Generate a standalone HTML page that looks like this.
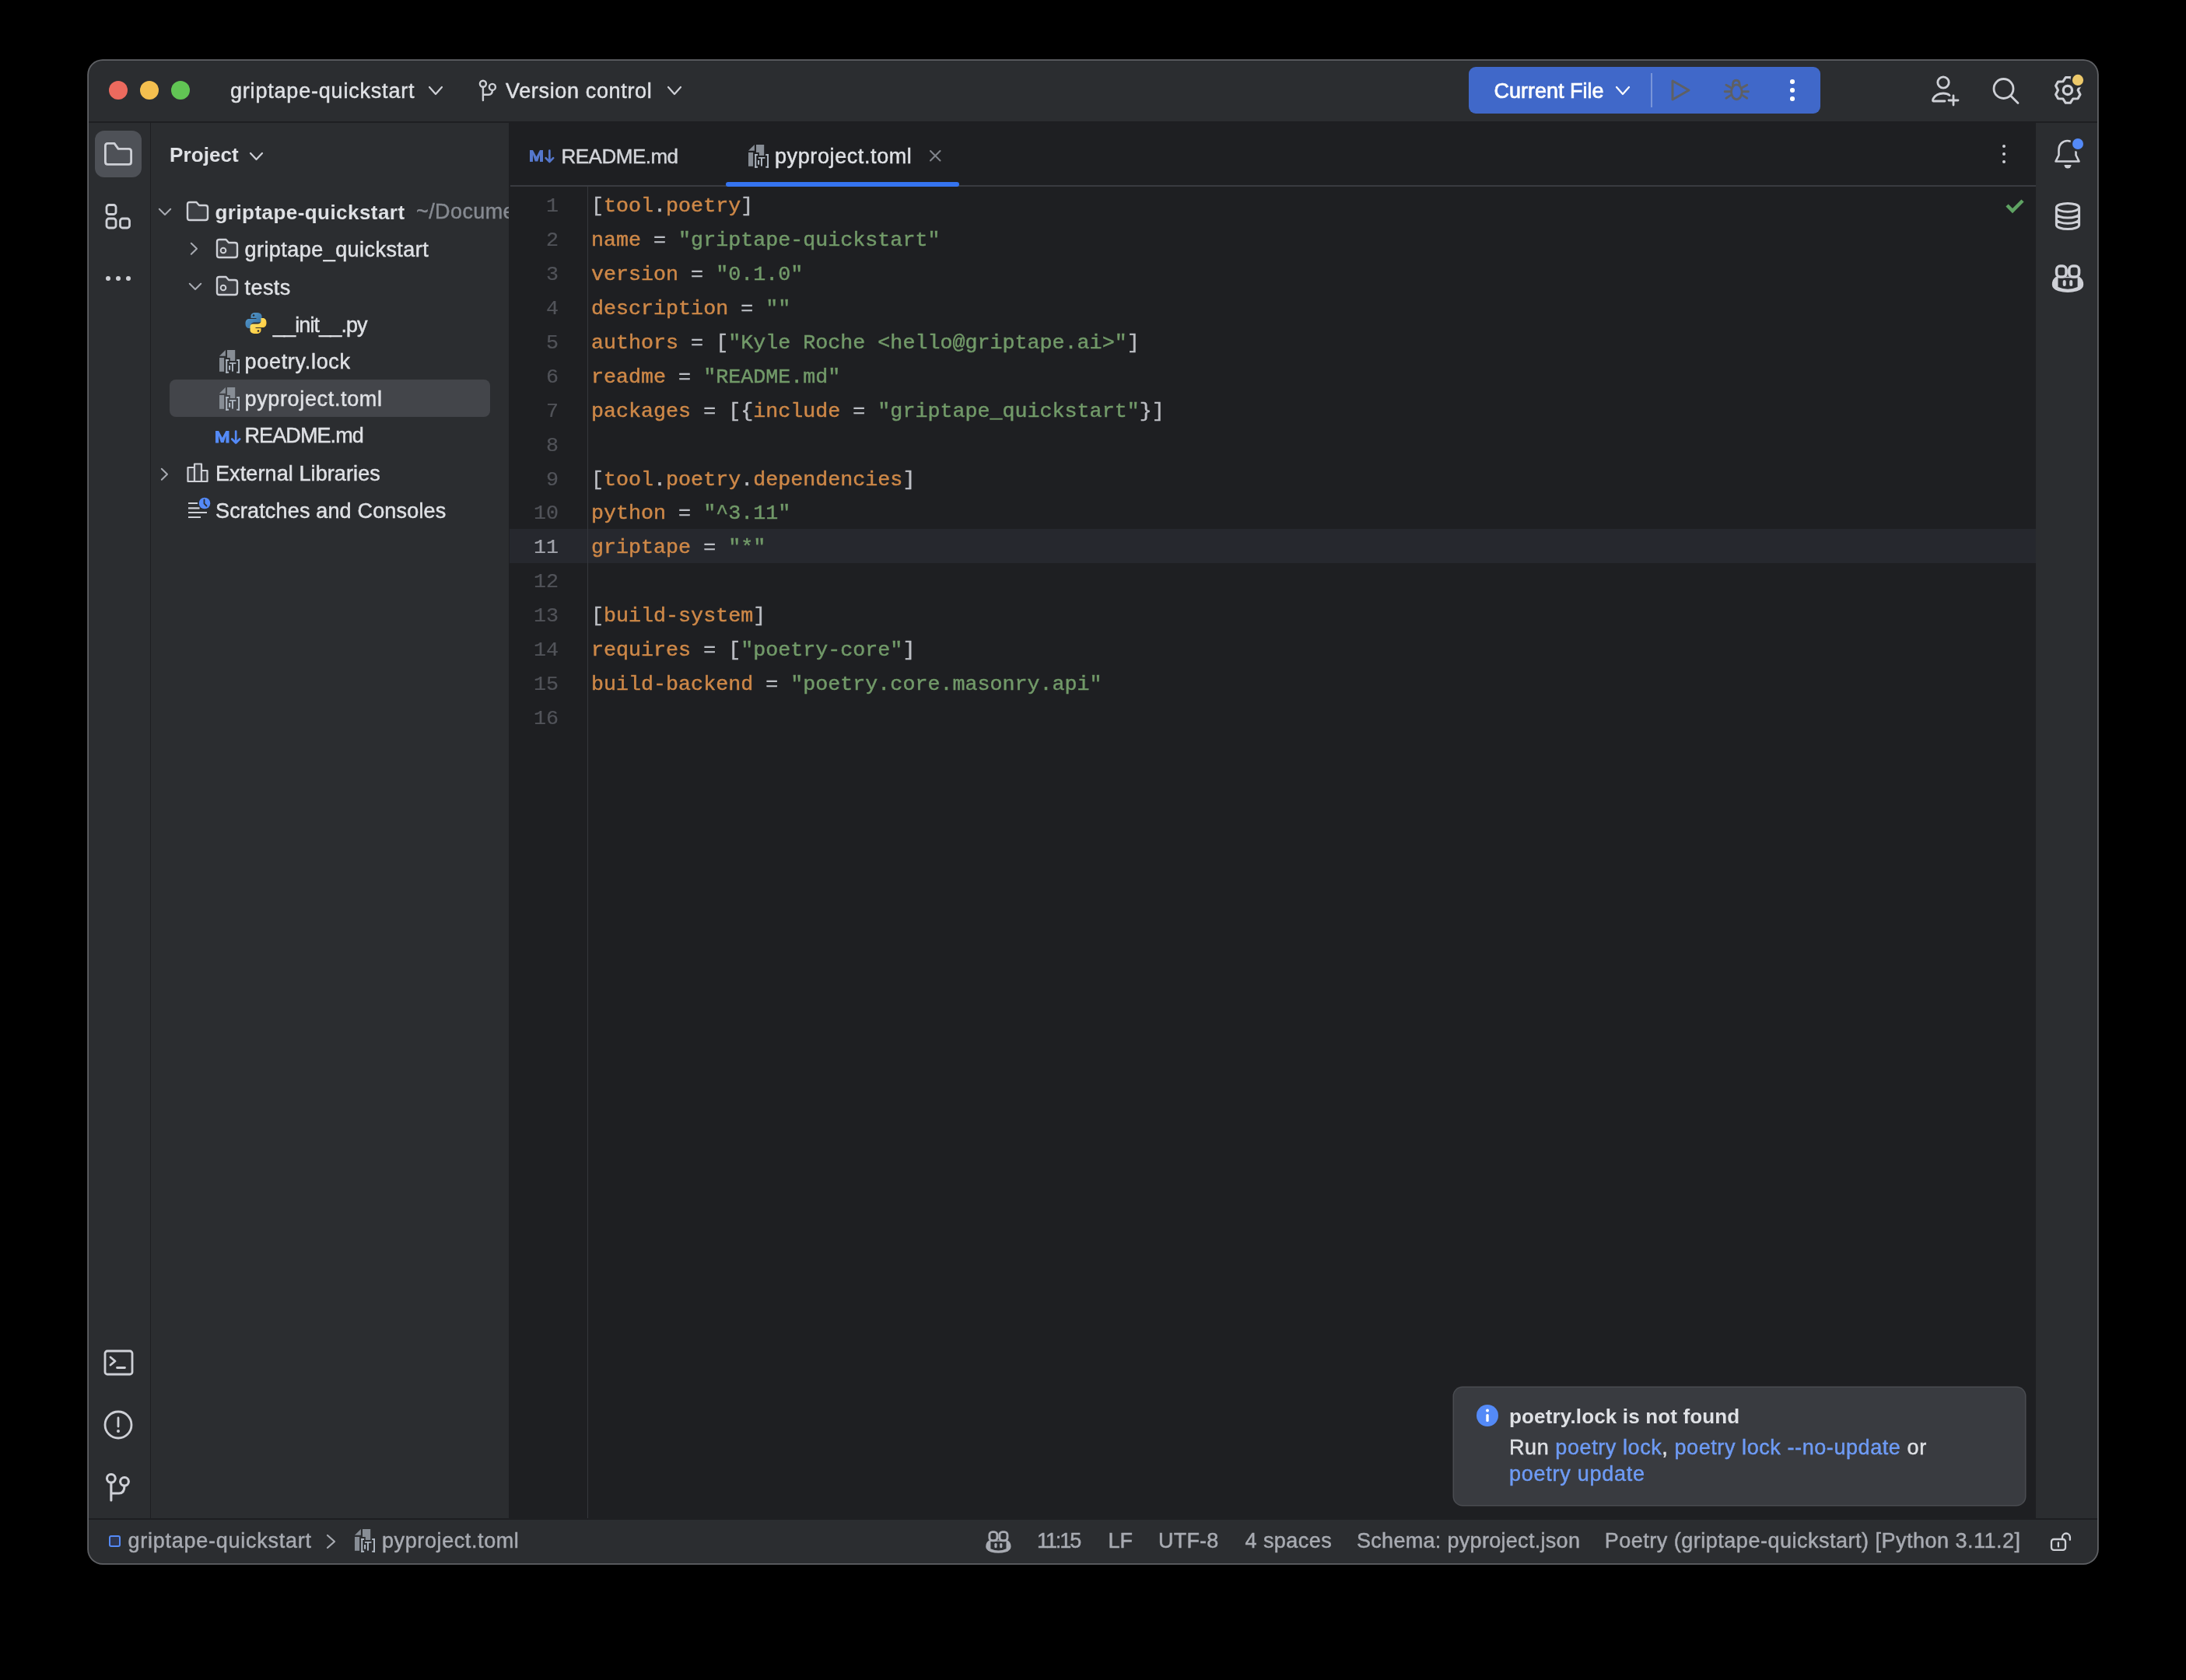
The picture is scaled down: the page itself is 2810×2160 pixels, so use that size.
<!DOCTYPE html>
<html><head><meta charset="utf-8"><title>pyproject.toml</title><style>
html,body{margin:0;padding:0;background:#000;width:2810px;height:2160px;overflow:hidden;}
.t{position:absolute;white-space:nowrap;font-family:'Liberation Sans', sans-serif;-webkit-text-stroke-width:0.45px;}
.r{position:absolute;}
.s{position:absolute;overflow:visible;}
</style></head>
<body><div id="root" style="position:absolute;left:0;top:0;width:2810px;height:2160px;will-change:transform">
<div class="r" style="left:114px;top:78px;width:2582px;height:1932px;background:#2B2D30;border-radius:18px;box-shadow:0 0 0 1.8px #606266;"></div><div class="r" style="left:114px;top:156px;width:2582px;height:2px;background:#1E1F22;"></div><div class="r" style="left:193px;top:158px;width:1px;height:1794px;background:#1E1F22;"></div><div class="r" style="left:654px;top:158px;width:1px;height:1794px;background:#1E1F22;"></div><div class="r" style="left:655px;top:158px;width:1962px;height:1794px;background:#1E1F22;"></div><div class="r" style="left:114px;top:1952px;width:2582px;height:2px;background:#1E1F22;"></div><div class="r" style="left:140px;top:104px;width:24px;height:24px;border-radius:50%;background:#EC6A5E"></div><div class="r" style="left:180px;top:104px;width:24px;height:24px;border-radius:50%;background:#F4BF4F"></div><div class="r" style="left:220px;top:104px;width:24px;height:24px;border-radius:50%;background:#61C554"></div><div class="t" style="left:296.00px;top:96.64px;font-size:27px;line-height:40px;color:#DFE1E5;font-weight:normal;letter-spacing:0.8px;font-family:'Liberation Sans', sans-serif;">griptape-quickstart</div><svg class="s" style="left:550px;top:110px;" width="20" height="13" viewBox="0 0 20 13"><polyline points="2,2 10.0,11 18,2" fill="none" stroke="#CED0D6" stroke-width="2.2" stroke-linecap="round" stroke-linejoin="round"/></svg><svg class="s" style="left:612px;top:100px;" width="34" height="36" viewBox="0 0 34 36"><g fill="none" stroke="#CED0D6" stroke-width="2.4" stroke-linecap="round"><circle cx="8.9" cy="7.8" r="4"/><circle cx="20.9" cy="11.9" r="4"/><path d="M8.9 11.8 V29 M8.9 21.8 H16 Q20.9 21.8 20.9 16"/></g></svg><div class="t" style="left:650.00px;top:96.64px;font-size:27px;line-height:40px;color:#DFE1E5;font-weight:normal;letter-spacing:0.65px;font-family:'Liberation Sans', sans-serif;">Version control</div><svg class="s" style="left:857px;top:110px;" width="20" height="13" viewBox="0 0 20 13"><polyline points="2,2 10.0,11 18,2" fill="none" stroke="#CED0D6" stroke-width="2.2" stroke-linecap="round" stroke-linejoin="round"/></svg><div class="r" style="left:1888px;top:86px;width:452px;height:60px;border-radius:9px;background:#4068C9"></div><div class="t" style="left:1920.50px;top:96.94px;font-size:27px;line-height:40px;color:#FFFFFF;font-weight:normal;letter-spacing:0px;font-family:'Liberation Sans', sans-serif;-webkit-text-stroke:0.7px #FFFFFF;">Current File</div><svg class="s" style="left:2076px;top:110px;" width="20" height="13" viewBox="0 0 20 13"><polyline points="2,2 10.0,11 18,2" fill="none" stroke="#FFFFFF" stroke-width="2.2" stroke-linecap="round" stroke-linejoin="round"/></svg><div class="r" style="left:2122px;top:94px;width:2px;height:44px;background:rgba(255,255,255,0.3);"></div><svg class="s" style="left:2144px;top:98px;" width="34" height="36" viewBox="0 0 34 36"><path d="M6 6 L27 18 L6 30 Z" fill="none" stroke="#5E6064" stroke-width="3" stroke-linejoin="round"/></svg><svg class="s" style="left:2214px;top:98px;" width="36" height="36" viewBox="0 0 36 36"><g fill="none" stroke="#5E6064" stroke-width="2.9" stroke-linecap="round"><ellipse cx="18.3" cy="20.3" rx="6.85" ry="9.4"/><path d="M13.3 12 Q13.3 5.2 17.8 5.2 Q22.3 5.2 22.3 12"/><path d="M4.9 11.2 L10.7 14.6 M3.2 19.7 H10.1 M4.9 28.3 L10.1 24.9 M31.7 11.2 L25.9 14.6 M33.4 19.7 H26.5 M31.7 28.3 L26.5 24.9"/></g></svg><div class="r" style="left:2301.2px;top:102.4px;width:5.6px;height:5.6px;border-radius:50%;background:#fff"></div><div class="r" style="left:2301.2px;top:113.2px;width:5.6px;height:5.6px;border-radius:50%;background:#fff"></div><div class="r" style="left:2301.2px;top:124.10000000000001px;width:5.6px;height:5.6px;border-radius:50%;background:#fff"></div><svg class="s" style="left:2478px;top:94px;" width="40" height="42" viewBox="0 0 40 42"><g fill="none" stroke="#CED0D6" stroke-width="2.8" stroke-linecap="round"><circle cx="20" cy="12" r="7.2"/><path d="M22 36 H7 Q6 36 7 33 Q11 26 20 26 Q25 26 28 28.5"/><path d="M33 29 V41 M27 35 H39"/></g></svg><svg class="s" style="left:2556px;top:94px;" width="44" height="44" viewBox="0 0 44 44"><g fill="none" stroke="#CED0D6" stroke-width="2.8" stroke-linecap="round"><circle cx="19.5" cy="20" r="12.5"/><path d="M29 29.5 L38 38.5"/></g></svg><svg class="s" style="left:2632px;top:88px;" width="56" height="52" viewBox="0 0 56 52"><path d="M23.30 11.50 L29.30 11.50 L32.70 16.81 L39.00 17.10 L42.00 22.30 L39.10 27.90 L42.00 33.50 L39.00 38.70 L32.70 38.99 L29.30 44.30 L23.30 44.30 L19.90 38.99 L13.60 38.70 L10.60 33.50 L13.50 27.90 L10.60 22.30 L13.60 17.10 L19.90 16.81 Z" fill="none" stroke="#CED0D6" stroke-width="3.1" stroke-linejoin="round"/><circle cx="25.9" cy="27.9" r="5.6" fill="none" stroke="#CED0D6" stroke-width="3.3"/><circle cx="39" cy="14.9" r="9.8" fill="#2B2D30"/><circle cx="39" cy="14.9" r="7.1" fill="#EDC96B"/></svg><div class="r" style="left:122px;top:168px;width:60px;height:60px;border-radius:12px;background:#4E5157"></div><svg class="s" style="left:130px;top:178px;" width="44" height="40" viewBox="0 0 44 40"><path d="M5.4 9.5 Q5.4 6.4 8.5 6.4 H17 L22 13.4 H35.5 Q38.6 13.4 38.6 16.5 V30.3 Q38.6 33.4 35.5 33.4 H8.5 Q5.4 33.4 5.4 30.3 Z" fill="none" stroke="#CED0D6" stroke-width="2.8" stroke-linejoin="round"/></svg><svg class="s" style="left:130px;top:258px;" width="44" height="40" viewBox="0 0 44 40"><g fill="none" stroke="#CED0D6" stroke-width="2.8"><rect x="7" y="5.5" width="12" height="12" rx="3"/><rect x="7" y="23" width="12" height="12" rx="3"/><rect x="24.5" y="23" width="12" height="12" rx="3"/></g></svg><div class="r" style="left:136px;top:355px;width:6px;height:6px;border-radius:50%;background:#CED0D6"></div><div class="r" style="left:149px;top:355px;width:6px;height:6px;border-radius:50%;background:#CED0D6"></div><div class="r" style="left:162px;top:355px;width:6px;height:6px;border-radius:50%;background:#CED0D6"></div><svg class="s" style="left:130px;top:1730px;" width="44" height="44" viewBox="0 0 44 44"><g fill="none" stroke="#CED0D6" stroke-width="2.8" stroke-linecap="round" stroke-linejoin="round"><rect x="5" y="7" width="35" height="30" rx="3"/><path d="M12 15 L18 20 L12 25 M20.5 28.5 H30.5"/></g></svg><svg class="s" style="left:130px;top:1810px;" width="44" height="44" viewBox="0 0 44 44"><g fill="none" stroke="#CED0D6" stroke-width="2.8" stroke-linecap="round"><circle cx="22" cy="22" r="17"/><path d="M22 13 V24"/></g><circle cx="22" cy="30" r="2" fill="#CED0D6"/></svg><svg class="s" style="left:128px;top:1886px;" width="48" height="48" viewBox="0 0 48 48"><g fill="none" stroke="#CED0D6" stroke-width="3.1" stroke-linecap="round"><circle cx="14.86" cy="14.86" r="5.4"/><circle cx="32" cy="18.86" r="5.4"/><path d="M14.86 20.3 V42.9 M14.86 34 H25 Q32 34 32 24.3"/></g></svg><div class="t" style="left:218.00px;top:179.39px;font-size:26px;line-height:40px;color:#DFE1E5;font-weight:bold;letter-spacing:0.1px;font-family:'Liberation Sans', sans-serif;-webkit-text-stroke-width:0;">Project</div><svg class="s" style="left:320px;top:195px;" width="19" height="12" viewBox="0 0 19 12"><polyline points="2,2 9.5,10 17,2" fill="none" stroke="#CED0D6" stroke-width="2.2" stroke-linecap="round" stroke-linejoin="round"/></svg><div class="r" style="left:218px;top:488px;width:412px;height:48px;border-radius:8px;background:#43454A"></div><svg class="s" style="left:202px;top:266px;" width="20" height="14" viewBox="0 0 20 14"><polyline points="2.8,2.8 10,10 17.2,2.8" fill="none" stroke="#A8ABB2" stroke-width="2" stroke-linecap="round" stroke-linejoin="round"/></svg><svg class="s" style="left:239px;top:258px;" width="31" height="28" viewBox="0 0 31 28"><path d="M2 5 Q2 2 5 2 H13.5 L17 6 H25 Q28 6 28 9 V22 Q28 25 25 25 H5 Q2 25 2 22 Z" fill="#3C3E43" stroke="#CED0D6" stroke-width="2.4" stroke-linejoin="round"/></svg><div class="t" style="left:276.50px;top:253.19px;font-size:26px;line-height:40px;color:#DFE1E5;font-weight:bold;letter-spacing:0.45px;font-family:'Liberation Sans', sans-serif;-webkit-text-stroke-width:0;">griptape-quickstart</div><div class="t" style="left:535px;top:252px;width:119px;overflow:hidden;white-space:nowrap;font-size:27px;line-height:40px;color:#868A91;font-family:'Liberation Sans', sans-serif;letter-spacing:0.4px">~/Documents/griptape</div><svg class="s" style="left:243px;top:310px;" width="14" height="20" viewBox="0 0 14 20"><polyline points="2.8,2.8 10,9.8 2.8,16.8" fill="none" stroke="#A8ABB2" stroke-width="2" stroke-linecap="round" stroke-linejoin="round"/></svg><svg class="s" style="left:277px;top:306px;" width="31" height="28" viewBox="0 0 31 28"><path d="M2 5 Q2 2 5 2 H13.5 L17 6 H25 Q28 6 28 9 V22 Q28 25 25 25 H5 Q2 25 2 22 Z" fill="#3C3E43" stroke="#CED0D6" stroke-width="2.4" stroke-linejoin="round"/><circle cx="10" cy="16" r="3.3" fill="none" stroke="#CED0D6" stroke-width="2"/></svg><div class="t" style="left:314.50px;top:301.44px;font-size:27px;line-height:40px;color:#DFE1E5;font-weight:normal;letter-spacing:0.45px;font-family:'Liberation Sans', sans-serif;">griptape_quickstart</div><svg class="s" style="left:241px;top:362px;" width="20" height="14" viewBox="0 0 20 14"><polyline points="2.8,2.8 10,10 17.2,2.8" fill="none" stroke="#A8ABB2" stroke-width="2" stroke-linecap="round" stroke-linejoin="round"/></svg><svg class="s" style="left:277px;top:354px;" width="31" height="28" viewBox="0 0 31 28"><path d="M2 5 Q2 2 5 2 H13.5 L17 6 H25 Q28 6 28 9 V22 Q28 25 25 25 H5 Q2 25 2 22 Z" fill="#3C3E43" stroke="#CED0D6" stroke-width="2.4" stroke-linejoin="round"/><circle cx="10" cy="16" r="3.3" fill="none" stroke="#CED0D6" stroke-width="2"/></svg><div class="t" style="left:314.50px;top:349.64px;font-size:27px;line-height:40px;color:#DFE1E5;font-weight:normal;letter-spacing:0.45px;font-family:'Liberation Sans', sans-serif;">tests</div><svg class="s" style="left:315px;top:401px;" width="29" height="30" viewBox="0 0 29 30"><defs><linearGradient id="pb" x1="0" y1="0" x2="1" y2="1"><stop offset="0" stop-color="#5A9FD4"/><stop offset="1" stop-color="#306998"/></linearGradient><linearGradient id="py" x1="0" y1="0" x2="1" y2="1"><stop offset="0" stop-color="#FFE873"/><stop offset="1" stop-color="#FFC331"/></linearGradient></defs><path d="M14 1 C9 1 7.5 3 7.5 5.5 V8 H14.5 V9 H5 C2 9 0.5 11.5 0.5 15 C0.5 18.5 2 21 5 21 H7.5 V17.5 C7.5 15 9.5 13.5 12 13.5 H18 C20 13.5 21.5 12 21.5 10 V5.5 C21.5 3 19.5 1 14 1 Z" fill="url(#pb)"/><circle cx="11" cy="4.5" r="1.3" fill="#2B2D30"/><path d="M14 28 C19 28 20.5 26 20.5 23.5 V21 H13.5 V20 H23 C26 20 27.5 17.5 27.5 14 C27.5 10.5 26 8 23 8 H20.5 V11.5 C20.5 14 18.5 15.5 16 15.5 H10 C8 15.5 6.5 17 6.5 19 V23.5 C6.5 26 8.5 28 14 28 Z" fill="url(#py)"/><circle cx="17" cy="24.5" r="1.3" fill="#2B2D30"/></svg><div class="t" style="left:351.00px;top:398.04px;font-size:27px;line-height:40px;color:#DFE1E5;font-weight:normal;letter-spacing:-0.9px;font-family:'Liberation Sans', sans-serif;">__init__.py</div><svg class="s" style="left:282px;top:449.9px;" width="28" height="32" viewBox="0 0 28 32"><g fill="#878D95"><path d="M0 7.8 L7.9 0 V7.8 Z"/><rect x="0" y="10" width="6.1" height="17.8"/><path d="M10 0 H20.2 V14 H13.8 V10 H10 Z"/></g><g fill="#B2BBC5"><rect x="8.3" y="12.1" width="1.9" height="17.6"/><rect x="8.3" y="12.1" width="3.8" height="1.9"/><rect x="8.3" y="27.8" width="3.8" height="1.9"/><rect x="24.1" y="12.1" width="1.9" height="17.6"/><rect x="22.2" y="12.1" width="3.8" height="1.9"/><rect x="22.2" y="27.8" width="3.8" height="1.9"/><rect x="12.1" y="20" width="2" height="5.7"/><rect x="12.9" y="16.1" width="8.5" height="1.7"/><rect x="16" y="17" width="1.9" height="10.6"/></g></svg><div class="t" style="left:314.50px;top:444.84px;font-size:27px;line-height:40px;color:#DFE1E5;font-weight:normal;letter-spacing:0.7px;font-family:'Liberation Sans', sans-serif;">poetry.lock</div><svg class="s" style="left:282px;top:498px;" width="28" height="32" viewBox="0 0 28 32"><g fill="#878D95"><path d="M0 7.8 L7.9 0 V7.8 Z"/><rect x="0" y="10" width="6.1" height="17.8"/><path d="M10 0 H20.2 V14 H13.8 V10 H10 Z"/></g><g fill="#B2BBC5"><rect x="8.3" y="12.1" width="1.9" height="17.6"/><rect x="8.3" y="12.1" width="3.8" height="1.9"/><rect x="8.3" y="27.8" width="3.8" height="1.9"/><rect x="24.1" y="12.1" width="1.9" height="17.6"/><rect x="22.2" y="12.1" width="3.8" height="1.9"/><rect x="22.2" y="27.8" width="3.8" height="1.9"/><rect x="12.1" y="20" width="2" height="5.7"/><rect x="12.9" y="16.1" width="8.5" height="1.7"/><rect x="16" y="17" width="1.9" height="10.6"/></g></svg><div class="t" style="left:314.50px;top:492.94px;font-size:27px;line-height:40px;color:#DFE1E5;font-weight:normal;letter-spacing:0.65px;font-family:'Liberation Sans', sans-serif;">pyproject.toml</div><svg class="s" style="left:276.6px;top:554px;" width="33" height="18" viewBox="0 0 33 18"><g transform="scale(1.03)"><path d="M0 15 V0 H4 L8.5 8.5 L13 0 H17 V15 H13 V6 L10.3 14.6 H6.7 L4 6 V15 Z" fill="#548AF7"/><path d="M25.4 0.5 V13.5 M20.6 10.2 L25.4 15 L30.2 10.2" fill="none" stroke="#548AF7" stroke-width="2.6" stroke-linecap="round" stroke-linejoin="round"/></g></svg><div class="t" style="left:314.50px;top:540.44px;font-size:27px;line-height:40px;color:#DFE1E5;font-weight:normal;letter-spacing:-0.9px;font-family:'Liberation Sans', sans-serif;">README.md</div><svg class="s" style="left:205px;top:600px;" width="14" height="20" viewBox="0 0 14 20"><polyline points="2.8,2.8 10,9.8 2.8,16.8" fill="none" stroke="#A8ABB2" stroke-width="2" stroke-linecap="round" stroke-linejoin="round"/></svg><svg class="s" style="left:239px;top:594px;" width="30" height="28" viewBox="0 0 30 28"><g fill="#3C3E43" stroke="#CED0D6" stroke-width="2.2" stroke-linejoin="round"><rect x="2.5" y="7" width="8.5" height="18"/><rect x="11" y="2.5" width="9" height="22.5"/><rect x="20" y="11" width="7.5" height="14"/></g></svg><div class="t" style="left:277.00px;top:588.84px;font-size:27px;line-height:40px;color:#DFE1E5;font-weight:normal;letter-spacing:0.1px;font-family:'Liberation Sans', sans-serif;">External Libraries</div><svg class="s" style="left:239px;top:637px;" width="34" height="32" viewBox="0 0 34 32"><g stroke="#CED0D6" stroke-width="2.2"><path d="M3 10 H15 M3 16.3 H17.5 M3 22 H27 M3 28 H19"/></g><circle cx="24" cy="10" r="7.3" fill="#548AF7"/><path d="M23.5 5.5 V10.5 L26.5 13.5" fill="none" stroke="#2B2D30" stroke-width="1.8" stroke-linecap="round"/></svg><div class="t" style="left:277.00px;top:637.24px;font-size:27px;line-height:40px;color:#DFE1E5;font-weight:normal;letter-spacing:0.17px;font-family:'Liberation Sans', sans-serif;">Scratches and Consoles</div><div class="r" style="left:656px;top:238px;width:1961px;height:2px;background:#393B40;"></div><svg class="s" style="left:681px;top:193.2px;" width="33" height="18" viewBox="0 0 33 18"><g transform="scale(1.0)"><path d="M0 15 V0 H4 L8.5 8.5 L13 0 H17 V15 H13 V6 L10.3 14.6 H6.7 L4 6 V15 Z" fill="#5577CC"/><path d="M25.4 0.5 V13.5 M20.6 10.2 L25.4 15 L30.2 10.2" fill="none" stroke="#5577CC" stroke-width="2.6" stroke-linecap="round" stroke-linejoin="round"/></g></svg><div class="t" style="left:721.50px;top:181.09px;font-size:26px;line-height:40px;color:#D2D4D9;font-weight:normal;letter-spacing:-0.5px;font-family:'Liberation Sans', sans-serif;">README.md</div><svg class="s" style="left:961.9px;top:186px;" width="28" height="32" viewBox="0 0 28 32"><g fill="#878D95"><path d="M0 7.8 L7.9 0 V7.8 Z"/><rect x="0" y="10" width="6.1" height="17.8"/><path d="M10 0 H20.2 V14 H13.8 V10 H10 Z"/></g><g fill="#B2BBC5"><rect x="8.3" y="12.1" width="1.9" height="17.6"/><rect x="8.3" y="12.1" width="3.8" height="1.9"/><rect x="8.3" y="27.8" width="3.8" height="1.9"/><rect x="24.1" y="12.1" width="1.9" height="17.6"/><rect x="22.2" y="12.1" width="3.8" height="1.9"/><rect x="22.2" y="27.8" width="3.8" height="1.9"/><rect x="12.1" y="20" width="2" height="5.7"/><rect x="12.9" y="16.1" width="8.5" height="1.7"/><rect x="16" y="17" width="1.9" height="10.6"/></g></svg><div class="t" style="left:996.00px;top:180.74px;font-size:27px;line-height:40px;color:#DFE1E5;font-weight:normal;letter-spacing:0.6px;font-family:'Liberation Sans', sans-serif;">pyproject.toml</div><svg class="s" style="left:1190.8px;top:188.8px;" width="22" height="22" viewBox="0 0 22 22"><path d="M5 5 L17.5 17.5 M17.5 5 L5 17.5" stroke="#80848B" stroke-width="2.1" stroke-linecap="round"/></svg><div class="r" style="left:933px;top:234px;width:300px;height:6px;border-radius:3px;background:#3574F0"></div><div class="r" style="left:2573.5px;top:185.8px;width:4.4px;height:4.4px;border-radius:50%;background:#CED0D6"></div><div class="r" style="left:2573.5px;top:195.8px;width:4.4px;height:4.4px;border-radius:50%;background:#CED0D6"></div><div class="r" style="left:2573.5px;top:205.8px;width:4.4px;height:4.4px;border-radius:50%;background:#CED0D6"></div><div class="r" style="left:655px;top:680px;width:1962px;height:44px;background:#26282E;"></div><div class="r" style="left:754.5px;top:240px;width:1.5px;height:1712px;background:#35373C;"></div><div class="t" style="left:600px;width:118px;text-align:right;top:245.10px;font-size:26.7px;line-height:40px;color:#515359;font-family:'Liberation Mono', monospace;-webkit-text-stroke:0.2px #515359">1</div><div class="t" style="left:760px;top:245.10px;font-size:26.7px;line-height:40px;font-family:'Liberation Mono', monospace;white-space:pre;-webkit-text-stroke-width:0.45px"><span style="color:#BCBEC4">[</span><span style="color:#CE8848">tool</span><span style="color:#BCBEC4">.</span><span style="color:#CE8848">poetry</span><span style="color:#BCBEC4">]</span></div><div class="t" style="left:600px;width:118px;text-align:right;top:289.03px;font-size:26.7px;line-height:40px;color:#515359;font-family:'Liberation Mono', monospace;-webkit-text-stroke:0.2px #515359">2</div><div class="t" style="left:760px;top:289.03px;font-size:26.7px;line-height:40px;font-family:'Liberation Mono', monospace;white-space:pre;-webkit-text-stroke-width:0.45px"><span style="color:#CE8848">name</span><span style="color:#BCBEC4"> = </span><span style="color:#729A69">&quot;griptape-quickstart&quot;</span></div><div class="t" style="left:600px;width:118px;text-align:right;top:332.96px;font-size:26.7px;line-height:40px;color:#515359;font-family:'Liberation Mono', monospace;-webkit-text-stroke:0.2px #515359">3</div><div class="t" style="left:760px;top:332.96px;font-size:26.7px;line-height:40px;font-family:'Liberation Mono', monospace;white-space:pre;-webkit-text-stroke-width:0.45px"><span style="color:#CE8848">version</span><span style="color:#BCBEC4"> = </span><span style="color:#729A69">&quot;0.1.0&quot;</span></div><div class="t" style="left:600px;width:118px;text-align:right;top:376.89px;font-size:26.7px;line-height:40px;color:#515359;font-family:'Liberation Mono', monospace;-webkit-text-stroke:0.2px #515359">4</div><div class="t" style="left:760px;top:376.89px;font-size:26.7px;line-height:40px;font-family:'Liberation Mono', monospace;white-space:pre;-webkit-text-stroke-width:0.45px"><span style="color:#CE8848">description</span><span style="color:#BCBEC4"> = </span><span style="color:#729A69">&quot;&quot;</span></div><div class="t" style="left:600px;width:118px;text-align:right;top:420.82px;font-size:26.7px;line-height:40px;color:#515359;font-family:'Liberation Mono', monospace;-webkit-text-stroke:0.2px #515359">5</div><div class="t" style="left:760px;top:420.82px;font-size:26.7px;line-height:40px;font-family:'Liberation Mono', monospace;white-space:pre;-webkit-text-stroke-width:0.45px"><span style="color:#CE8848">authors</span><span style="color:#BCBEC4"> = [</span><span style="color:#729A69">&quot;Kyle Roche &lt;hello@griptape.ai&gt;&quot;</span><span style="color:#BCBEC4">]</span></div><div class="t" style="left:600px;width:118px;text-align:right;top:464.75px;font-size:26.7px;line-height:40px;color:#515359;font-family:'Liberation Mono', monospace;-webkit-text-stroke:0.2px #515359">6</div><div class="t" style="left:760px;top:464.75px;font-size:26.7px;line-height:40px;font-family:'Liberation Mono', monospace;white-space:pre;-webkit-text-stroke-width:0.45px"><span style="color:#CE8848">readme</span><span style="color:#BCBEC4"> = </span><span style="color:#729A69">&quot;README.md&quot;</span></div><div class="t" style="left:600px;width:118px;text-align:right;top:508.68px;font-size:26.7px;line-height:40px;color:#515359;font-family:'Liberation Mono', monospace;-webkit-text-stroke:0.2px #515359">7</div><div class="t" style="left:760px;top:508.68px;font-size:26.7px;line-height:40px;font-family:'Liberation Mono', monospace;white-space:pre;-webkit-text-stroke-width:0.45px"><span style="color:#CE8848">packages</span><span style="color:#BCBEC4"> = [{</span><span style="color:#CE8848">include</span><span style="color:#BCBEC4"> = </span><span style="color:#729A69">&quot;griptape_quickstart&quot;</span><span style="color:#BCBEC4">}]</span></div><div class="t" style="left:600px;width:118px;text-align:right;top:552.61px;font-size:26.7px;line-height:40px;color:#515359;font-family:'Liberation Mono', monospace;-webkit-text-stroke:0.2px #515359">8</div><div class="t" style="left:600px;width:118px;text-align:right;top:596.54px;font-size:26.7px;line-height:40px;color:#515359;font-family:'Liberation Mono', monospace;-webkit-text-stroke:0.2px #515359">9</div><div class="t" style="left:760px;top:596.54px;font-size:26.7px;line-height:40px;font-family:'Liberation Mono', monospace;white-space:pre;-webkit-text-stroke-width:0.45px"><span style="color:#BCBEC4">[</span><span style="color:#CE8848">tool</span><span style="color:#BCBEC4">.</span><span style="color:#CE8848">poetry</span><span style="color:#BCBEC4">.</span><span style="color:#CE8848">dependencies</span><span style="color:#BCBEC4">]</span></div><div class="t" style="left:600px;width:118px;text-align:right;top:640.47px;font-size:26.7px;line-height:40px;color:#515359;font-family:'Liberation Mono', monospace;-webkit-text-stroke:0.2px #515359">10</div><div class="t" style="left:760px;top:640.47px;font-size:26.7px;line-height:40px;font-family:'Liberation Mono', monospace;white-space:pre;-webkit-text-stroke-width:0.45px"><span style="color:#CE8848">python</span><span style="color:#BCBEC4"> = </span><span style="color:#729A69">&quot;^3.11&quot;</span></div><div class="t" style="left:600px;width:118px;text-align:right;top:684.40px;font-size:26.7px;line-height:40px;color:#A1A3AB;font-family:'Liberation Mono', monospace;-webkit-text-stroke:0.2px #A1A3AB">11</div><div class="t" style="left:760px;top:684.40px;font-size:26.7px;line-height:40px;font-family:'Liberation Mono', monospace;white-space:pre;-webkit-text-stroke-width:0.45px"><span style="color:#CE8848">griptape</span><span style="color:#BCBEC4"> = </span><span style="color:#729A69">&quot;*&quot;</span></div><div class="t" style="left:600px;width:118px;text-align:right;top:728.33px;font-size:26.7px;line-height:40px;color:#515359;font-family:'Liberation Mono', monospace;-webkit-text-stroke:0.2px #515359">12</div><div class="t" style="left:600px;width:118px;text-align:right;top:772.26px;font-size:26.7px;line-height:40px;color:#515359;font-family:'Liberation Mono', monospace;-webkit-text-stroke:0.2px #515359">13</div><div class="t" style="left:760px;top:772.26px;font-size:26.7px;line-height:40px;font-family:'Liberation Mono', monospace;white-space:pre;-webkit-text-stroke-width:0.45px"><span style="color:#BCBEC4">[</span><span style="color:#CE8848">build-system</span><span style="color:#BCBEC4">]</span></div><div class="t" style="left:600px;width:118px;text-align:right;top:816.19px;font-size:26.7px;line-height:40px;color:#515359;font-family:'Liberation Mono', monospace;-webkit-text-stroke:0.2px #515359">14</div><div class="t" style="left:760px;top:816.19px;font-size:26.7px;line-height:40px;font-family:'Liberation Mono', monospace;white-space:pre;-webkit-text-stroke-width:0.45px"><span style="color:#CE8848">requires</span><span style="color:#BCBEC4"> = [</span><span style="color:#729A69">&quot;poetry-core&quot;</span><span style="color:#BCBEC4">]</span></div><div class="t" style="left:600px;width:118px;text-align:right;top:860.12px;font-size:26.7px;line-height:40px;color:#515359;font-family:'Liberation Mono', monospace;-webkit-text-stroke:0.2px #515359">15</div><div class="t" style="left:760px;top:860.12px;font-size:26.7px;line-height:40px;font-family:'Liberation Mono', monospace;white-space:pre;-webkit-text-stroke-width:0.45px"><span style="color:#CE8848">build-backend</span><span style="color:#BCBEC4"> = </span><span style="color:#729A69">&quot;poetry.core.masonry.api&quot;</span></div><div class="t" style="left:600px;width:118px;text-align:right;top:904.05px;font-size:26.7px;line-height:40px;color:#515359;font-family:'Liberation Mono', monospace;-webkit-text-stroke:0.2px #515359">16</div><svg class="s" style="left:2576px;top:253px;" width="28" height="24" viewBox="0 0 28 24"><path d="M4 11 L11 18 L24 5" fill="none" stroke="#5FA363" stroke-width="4.5"/></svg><div class="r" style="left:2618px;top:158px;width:78px;height:1794px;background:#2B2D30;"></div><svg class="s" style="left:2636px;top:176px;" width="46" height="46" viewBox="0 0 46 46"><path d="M6.5 31.5 L10.5 23.5 V16 A11 11 0 0 1 32.5 16 V23.5 L36.5 31.5 Z" fill="none" stroke="#CED0D6" stroke-width="2.6" stroke-linejoin="round"/><path d="M17.5 36 H26.5 A4.5 4.5 0 0 1 17.5 36 Z" fill="#CED0D6"/><circle cx="35" cy="9" r="10" fill="#2B2D30"/><circle cx="35" cy="9" r="7" fill="#548AF7"/></svg><svg class="s" style="left:2636px;top:256px;" width="44" height="44" viewBox="0 0 44 44"><g fill="none" stroke="#CED0D6" stroke-width="3"><ellipse cx="22" cy="10.85" rx="14.6" ry="5.45"/><path d="M7.4 10.85 V33.15 M36.6 10.85 V33.15 M7.4 18.65 A14.6 5.45 0 0 0 36.6 18.65 M7.4 25.75 A14.6 5.45 0 0 0 36.6 25.75 M7.4 33.15 A14.6 5.45 0 0 0 36.6 33.15"/></g></svg><svg class="s" style="left:2630px;top:330px;" width="58" height="54" viewBox="0 0 58 54"><g transform="scale(1.0)"><path d="M13 25.7 L43 25.7 Q48.3 29 48.2 36 Q48 41.5 40 44.3 Q34 46 28 46 Q22 46 16 44.3 Q8 41.5 7.8 36 Q7.7 29 13 25.7 Z" fill="#CED0D6"/><path d="M15.5 27.2 H40.6 V39 Q34 41.8 28 41.8 Q22 41.8 15.5 39 Z" fill="#2B2D30"/><g fill="none" stroke="#CED0D6" stroke-width="3.6"><rect x="13.6" y="12" width="12.5" height="14" rx="4.8"/><rect x="29.8" y="12" width="12.7" height="14" rx="4.8"/></g><rect x="21.7" y="30" width="4" height="7.9" rx="2" fill="#CED0D6"/><rect x="30.2" y="30" width="4" height="7.9" rx="2" fill="#CED0D6"/></g></svg><div class="r" style="left:1869px;top:1783.5px;width:734px;height:151px;border-radius:11px;background:#393B40;box-shadow:0 0 0 1.5px #4A4C51"></div><svg class="s" style="left:1897px;top:1806px;" width="30" height="30" viewBox="0 0 30 30"><circle cx="15" cy="14" r="14" fill="#548AF7"/><rect x="13.3" y="12" width="3.4" height="10" rx="1.5" fill="#fff"/><circle cx="15" cy="7.5" r="2" fill="#fff"/></svg><div class="t" style="left:1940.00px;top:1800.59px;font-size:26px;line-height:40px;color:#DFE1E5;font-weight:bold;letter-spacing:0.15px;font-family:'Liberation Sans', sans-serif;-webkit-text-stroke-width:0;">poetry.lock is not found</div><div class="t" style="left:1940.00px;top:1840.84px;font-size:27px;line-height:40px;color:#DFE1E5;font-weight:normal;letter-spacing:0.58px;font-family:'Liberation Sans', sans-serif;">Run <span style="color:#6E9BF5">poetry lock</span>, <span style="color:#6E9BF5">poetry lock --no-update</span> or</div><div class="t" style="left:1940.00px;top:1874.64px;font-size:27px;line-height:40px;color:#DFE1E5;font-weight:normal;letter-spacing:0.75px;font-family:'Liberation Sans', sans-serif;"><span style="color:#6E9BF5">poetry update</span></div><div class="r" style="left:140px;top:1974px;width:15px;height:15px;border-radius:3px;box-sizing:border-box;border:2px solid #548AF7;background:#2E3650"></div><div class="t" style="left:164.40px;top:1961.14px;font-size:27px;line-height:40px;color:#A8ABB2;font-weight:normal;letter-spacing:0.75px;font-family:'Liberation Sans', sans-serif;">griptape-quickstart</div><svg class="s" style="left:418px;top:1970px;" width="16" height="24" viewBox="0 0 16 24"><polyline points="3,4 12,12 3,20" fill="none" stroke="#A8ABB2" stroke-width="2.2" stroke-linecap="round" stroke-linejoin="round"/></svg><svg class="s" style="left:455.7px;top:1966px;" width="28" height="32" viewBox="0 0 28 32"><g fill="#878D95"><path d="M0 7.8 L7.9 0 V7.8 Z"/><rect x="0" y="10" width="6.1" height="17.8"/><path d="M10 0 H20.2 V14 H13.8 V10 H10 Z"/></g><g fill="#B2BBC5"><rect x="8.3" y="12.1" width="1.9" height="17.6"/><rect x="8.3" y="12.1" width="3.8" height="1.9"/><rect x="8.3" y="27.8" width="3.8" height="1.9"/><rect x="24.1" y="12.1" width="1.9" height="17.6"/><rect x="22.2" y="12.1" width="3.8" height="1.9"/><rect x="22.2" y="27.8" width="3.8" height="1.9"/><rect x="12.1" y="20" width="2" height="5.7"/><rect x="12.9" y="16.1" width="8.5" height="1.7"/><rect x="16" y="17" width="1.9" height="10.6"/></g></svg><div class="t" style="left:491.00px;top:1961.14px;font-size:27px;line-height:40px;color:#A8ABB2;font-weight:normal;letter-spacing:0.6px;font-family:'Liberation Sans', sans-serif;">pyproject.toml</div><svg class="s" style="left:1261.4px;top:1959.8px;" width="46" height="43" viewBox="0 0 46 43"><g transform="scale(0.8)"><path d="M13 25.7 L43 25.7 Q48.3 29 48.2 36 Q48 41.5 40 44.3 Q34 46 28 46 Q22 46 16 44.3 Q8 41.5 7.8 36 Q7.7 29 13 25.7 Z" fill="#A8ABB2"/><path d="M15.5 27.2 H40.6 V39 Q34 41.8 28 41.8 Q22 41.8 15.5 39 Z" fill="#2B2D30"/><g fill="none" stroke="#A8ABB2" stroke-width="3.6"><rect x="13.6" y="12" width="12.5" height="14" rx="4.8"/><rect x="29.8" y="12" width="12.7" height="14" rx="4.8"/></g><rect x="21.7" y="30" width="4" height="7.9" rx="2" fill="#A8ABB2"/><rect x="30.2" y="30" width="4" height="7.9" rx="2" fill="#A8ABB2"/></g></svg><div class="t" style="left:1333.00px;top:1960.94px;font-size:27px;line-height:40px;color:#A8ABB2;font-weight:normal;letter-spacing:-2.1px;font-family:'Liberation Sans', sans-serif;">11:15</div><div class="t" style="left:1424.50px;top:1960.94px;font-size:27px;line-height:40px;color:#A8ABB2;font-weight:normal;letter-spacing:0px;font-family:'Liberation Sans', sans-serif;">LF</div><div class="t" style="left:1489.00px;top:1960.94px;font-size:27px;line-height:40px;color:#A8ABB2;font-weight:normal;letter-spacing:0.2px;font-family:'Liberation Sans', sans-serif;">UTF-8</div><div class="t" style="left:1600.50px;top:1960.94px;font-size:27px;line-height:40px;color:#A8ABB2;font-weight:normal;letter-spacing:0.45px;font-family:'Liberation Sans', sans-serif;">4 spaces</div><div class="t" style="left:1744.00px;top:1960.94px;font-size:27px;line-height:40px;color:#A8ABB2;font-weight:normal;letter-spacing:0.3px;font-family:'Liberation Sans', sans-serif;">Schema: pyproject.json</div><div class="t" style="left:2062.80px;top:1960.94px;font-size:27px;line-height:40px;color:#A8ABB2;font-weight:normal;letter-spacing:0.5px;font-family:'Liberation Sans', sans-serif;">Poetry (griptape-quickstart) [Python 3.11.2]</div><svg class="s" style="left:2632px;top:1966px;" width="34" height="32" viewBox="0 0 34 32"><g fill="none" stroke="#CED0D6" stroke-width="2.3" stroke-linecap="round"><rect x="5" y="13" width="18" height="13.9" rx="3.2"/><path d="M19 13 V10.45 A4.95 4.95 0 0 1 28.9 10.45 V13.8 M13.9 17.3 V22.5"/></g></svg>
</div></body></html>
